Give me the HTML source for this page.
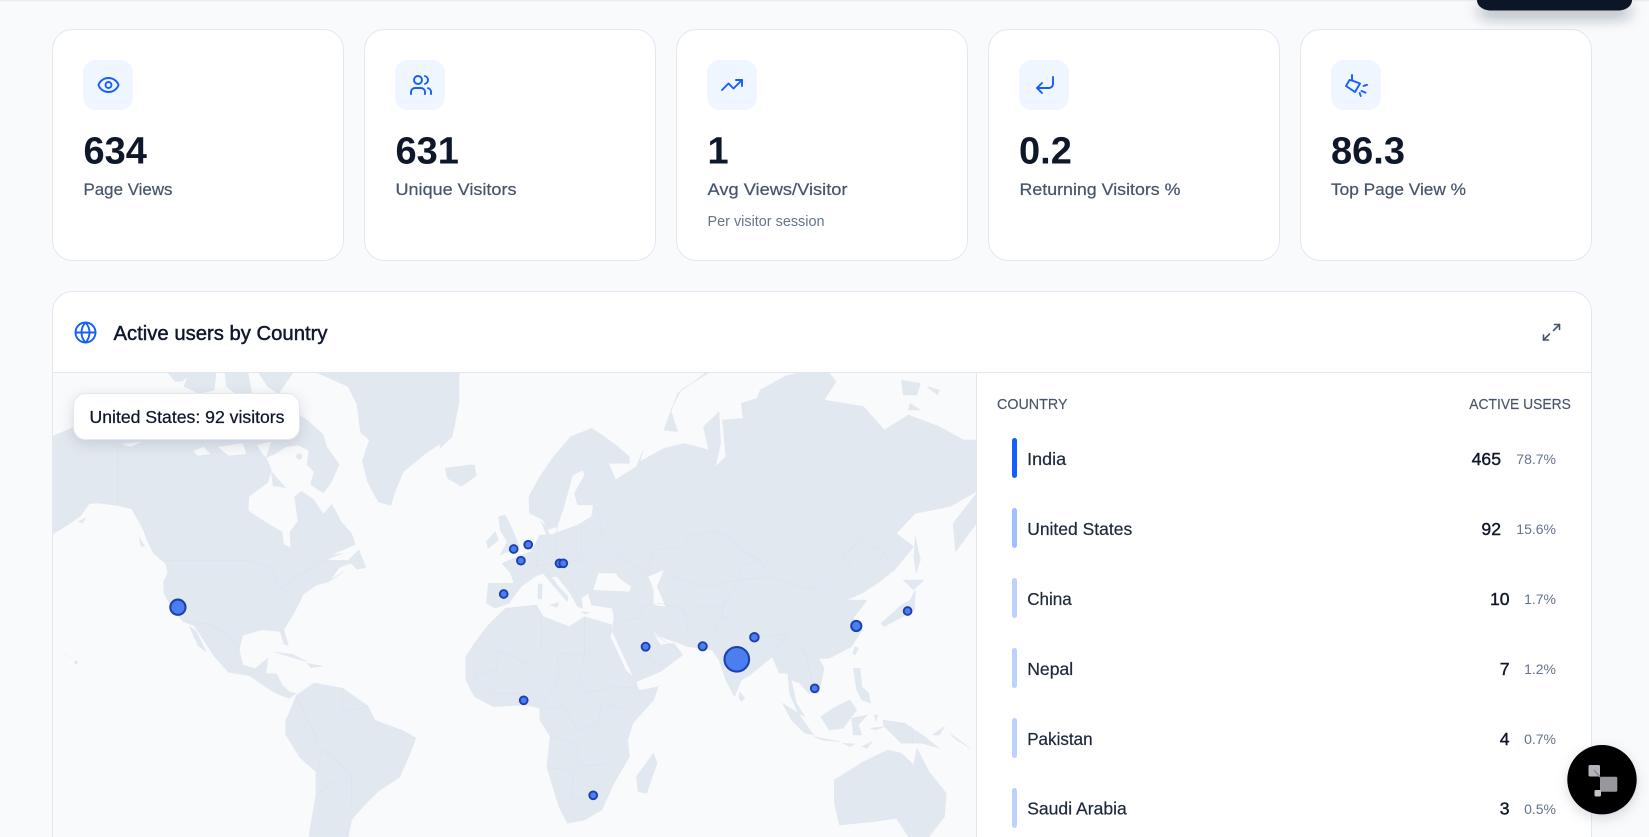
<!DOCTYPE html>
<html><head><meta charset="utf-8"><title>Analytics</title>
<style>
html,body{margin:0;padding:0;width:1649px;height:837px;overflow:hidden;background:#f8fafc}
svg{display:block;font-family:"Liberation Sans",sans-serif}
.num{font-size:38px;font-weight:700;fill:#0f172a}
.lab{font-size:17px;fill:#475569;stroke:#475569;stroke-width:.22}
.sub{font-size:14.5px;fill:#64748b}
.nm{font-size:17.5px;fill:#1e293b;stroke:#1e293b;stroke-width:.22}
.v{font-size:17.6px;fill:#0f172a;stroke:#0f172a;stroke-width:.4;text-anchor:end}
.p{font-size:14px;fill:#64748b;text-anchor:end}
.h{font-size:14.5px;fill:#475569;stroke:#475569;stroke-width:.15}
.ic{fill:none;stroke:#155dfc;stroke-width:1.9;stroke-linecap:round;stroke-linejoin:round}
.card{fill:#fff;stroke:#e2e8f0;stroke-width:1}
.box{fill:#eff6ff}
.land{fill:#e2e8f0;stroke:#e2e8f0;stroke-width:1.5;stroke-linejoin:round}
.water{fill:#f8fafc;stroke:none}
.b{fill:none;stroke:#d9e1eb;stroke-width:1.5;stroke-linejoin:round}
.m{fill:#4b7fef;stroke:#1e40af;stroke-width:1.9}
</style></head><body>
<svg width="1649" height="837" viewBox="0 0 1649 837" xmlns="http://www.w3.org/2000/svg">
<defs>
<clipPath id="mapc"><rect x="53" y="373" width="923" height="464"/></clipPath>
<filter id="sh" x="-30%" y="-60%" width="160%" height="240%"><feDropShadow dx="0" dy="4" stdDeviation="7" flood-color="#0f172a" flood-opacity=".13"/></filter>
<filter id="sh2" filterUnits="userSpaceOnUse" x="1440" y="0" width="209" height="60"><feDropShadow dx="0" dy="7" stdDeviation="7" flood-color="#1e293b" flood-opacity=".38"/></filter>
<filter id="sh3" x="-30%" y="-30%" width="160%" height="160%"><feDropShadow dx="0" dy="4" stdDeviation="6" flood-color="#0f172a" flood-opacity=".14"/></filter>
</defs>
<rect width="1649" height="837" fill="#f8fafc"/>
<rect x="0" y="0" width="1649" height="1" fill="#ebedf1"/>
<rect x="0" y="1" width="1649" height="1" fill="#f3f5f8"/>

<!-- stat cards -->
<rect class="card" x="52.5" y="29.5" width="291" height="231" rx="20"/>
<rect class="card" x="364.5" y="29.5" width="291" height="231" rx="20"/>
<rect class="card" x="676.5" y="29.5" width="291" height="231" rx="20"/>
<rect class="card" x="988.5" y="29.5" width="291" height="231" rx="20"/>
<rect class="card" x="1300.5" y="29.5" width="291" height="231" rx="20"/>
<path d="M1477 0H1632C1632 6 1626 10.5 1618 10.5H1491C1483 10.5 1477 6 1477 0Z" fill="#111827" filter="url(#sh2)"/>
<rect class="box" x="83" y="60" width="50" height="50" rx="13"/>
<rect class="box" x="395" y="60" width="50" height="50" rx="13"/>
<rect class="box" x="707" y="60" width="50" height="50" rx="13"/>
<rect class="box" x="1019" y="60" width="50" height="50" rx="13"/>
<rect class="box" x="1331" y="60" width="50" height="50" rx="13"/>

<g class="ic" transform="translate(96.5,73)"><path d="M2.062 12.348a1 1 0 0 1 0-.696 10.75 10.75 0 0 1 19.876 0 1 1 0 0 1 0 .696 10.75 10.75 0 0 1-19.876 0"/><circle cx="12" cy="12" r="3"/></g>
<g class="ic" transform="translate(409,73)"><path d="M16 21v-2a4 4 0 0 0-4-4H6a4 4 0 0 0-4 4v2"/><circle cx="9" cy="7" r="4"/><path d="M16 3.128a4 4 0 0 1 0 7.744"/><path d="M22 21v-2a4 4 0 0 0-3-3.87"/></g>
<g class="ic" transform="translate(720,73)"><path d="M16 7h6v6"/><path d="m22 7-8.5 8.5-5-5L2 17"/></g>
<g class="ic" transform="translate(1033,73)"><path d="M20 4v7a4 4 0 0 1-4 4H4"/><path d="m9 10-5 5 5 5"/></g>
<g class="ic"><path d="M1349.5 80L1352 80.5L1360 83.5L1355 92L1346 86Z"/><path d="M1352 75v5.5"/><path d="M1363.5 86l3.5-1.2"/><path d="M1361.5 91l4 1.6"/><path d="M1359.7 93l1 3"/></g>

<text class="num" x="83.5" y="163.5">634</text>
<text class="num" x="395.5" y="163.5">631</text>
<text class="num" x="707.5" y="163.5">1</text>
<text class="num" x="1019" y="163.5">0.2</text>
<text class="num" x="1331" y="163.5" textLength="74">86.3</text>
<text class="lab" x="83.5" y="195" textLength="89" lengthAdjust="spacingAndGlyphs">Page Views</text>
<text class="lab" x="395.5" y="195" textLength="121" lengthAdjust="spacingAndGlyphs">Unique Visitors</text>
<text class="lab" x="707.5" y="195" textLength="140" lengthAdjust="spacingAndGlyphs">Avg Views/Visitor</text>
<text class="lab" x="1019.5" y="195" textLength="161" lengthAdjust="spacingAndGlyphs">Returning Visitors %</text>
<text class="lab" x="1331" y="195" textLength="135" lengthAdjust="spacingAndGlyphs">Top Page View %</text>
<text class="sub" x="707.5" y="226" textLength="117" lengthAdjust="spacingAndGlyphs">Per visitor session</text>

<!-- main card -->
<path class="card" d="M52.5 838V311.5a20 20 0 0 1 20-20H1571.5a20 20 0 0 1 20 20V838Z"/>
<line x1="53" y1="372.5" x2="1591" y2="372.5" stroke="#e2e8f0"/>
<g class="ic" transform="translate(73.5,320.5)"><circle cx="12" cy="12" r="10"/><path d="M12 2a14.5 14.5 0 0 0 0 20 14.5 14.5 0 0 0 0-20"/><path d="M2 12h20"/></g>
<text x="113.5" y="340" font-size="20" fill="#0f172a" stroke="#0f172a" stroke-width=".45" textLength="214" lengthAdjust="spacingAndGlyphs">Active users by Country</text>
<g fill="none" stroke="#475569" stroke-width="1.6" stroke-linecap="round" stroke-linejoin="round"><path d="M1554.5 324.5h5v5"/><path d="M1559.5 324.5l-6 6"/><path d="M1543.5 335v5h5"/><path d="M1543.5 340l6-6"/></g>

<!-- map -->
<g clip-path="url(#mapc)">
<rect x="53" y="373" width="923" height="464" fill="#f8fafc"/>
<g transform="translate(0,280) scale(.357,.355)">
<g class="land">
<path d="M148 715L190 690 225 665 250 630 275 628 330 635 370 645 395 685 415 740 430 770 465 800 470 825 458 850 460 885 480 920 510 960 545 975 600 1060 640 1105 700 1115 750 1150 775 1165 810 1178 830 1165 810 1160 790 1140 775 1110 745 1108 750 1065 715 1095 680 1085 670 1040 680 1000 735 985 785 990 795 1025 808 1030 795 985 825 935 850 885 885 860 920 850 965 820 925 845 950 810 1000 790 960 790 905 790 960 770 925 775 995 745 985 715 955 680 930 632 905 660 880 620 845 595 825 610 835 680 812 710 815 755 795 745 790 710 740 680 695 650 697 610 750 570 760 535 745 500 770 490 800 470 840 400 400 400 205 415 148 440Z"/>
<path d="M838 380L860 395 905 435 915 470 950 520 925 575 905 600 870 575 880 540 860 520 865 480 835 465 800 470 790 450 800 400Z"/>
<path d="M760 540L800 585 765 580Z"/>
<path d="M975 790L1005 760 1025 810 1000 815Z"/>
<path d="M530 975L550 990 578 1048 555 1030Z"/>
<path d="M390 725L405 750 395 750Z"/>
<path d="M220 680L240 670 230 685Z"/>
<path d="M470 262L540 262 510 285 490 285Z"/>
<path d="M515 300L530 262 605 262 600 310 560 320Z"/>
<path d="M630 262L695 262 705 318 660 320 635 300Z"/>
<path d="M725 262L820 262 800 290 780 320 750 300Z"/>
<path d="M890 262L1285 262 1285 300 1275 380 1265 440 1190 490 1130 540 1105 600 1095 635 1060 625 1030 570 1015 510 1035 450 1010 430 1000 350 975 300Z"/>
<path d="M1250 530L1320 520 1335 550 1295 580 1255 560Z"/>
<path d="M770 1048L820 1055 860 1075 825 1065Z"/>
<path d="M862 1080L905 1088 870 1092Z"/>
<path d="M810 1220L830 1170 880 1135 960 1150 1030 1200 1050 1240 1130 1270 1165 1290 1150 1330 1120 1400 1060 1440 1020 1480 985 1520 975 1568 865 1568 885 1450 885 1385 840 1345 800 1280 800 1240Z"/>
<circle cx="213" cy="1077" r="4"/><circle cx="183" cy="1056" r="1"/><circle cx="195" cy="1063" r="1"/>
</g>
<g class="water">
<path d="M540 482L570 470 590 490 555 495Z"/><path d="M610 470L680 460 690 490 640 495Z"/><path d="M720 465L760 455 745 500 735 490Z"/><path d="M340 462L400 455 365 470Z"/>
</g>
<g class="land"><circle cx="838" cy="497" r="8"/></g>
<g class="b">
<path d="M330 460V635"/><path d="M465 790H690L760 810 785 870 880 805 925 785"/><path d="M510 960L590 970 640 1000 670 1040"/>
<path d="M370 645L410 720"/>
<path d="M830 1170L860 1240 890 1290 860 1330"/><path d="M900 1320L950 1360 985 1400 985 1480"/><path d="M960 1150V1220L1030 1200"/><path d="M890 1385L900 1320"/><path d="M890 1450L950 1400"/>
</g>
</g>
<g transform="translate(440,360) scale(.3444,.3333)">
<g class="land">
<path d="M140 670L215 670 205 640 180 610 225 590 265 575 290 525 310 525 292 480 320 525 400 495 440 470 445 435 400 435 390 400 420 345 415 330 385 345 360 440 340 500 310 510 300 480 260 460 258 410 290 350 330 290 380 230 440 205 470 225 510 255 550 290 550 310 490 310 510 360 570 320 590 270 580 305 650 265 710 250 780 270 765 200 810 155 815 250 800 320 830 290 820 180 880 175 875 130 920 115 930 90 1000 50 1040 38 1130 38 1150 65 1115 120 1230 140 1290 210 1360 165 1450 200 1520 240 1558 240 1558 395 1480 440 1380 460 1325 520 1375 560 1320 630 1270 670 1225 700 1180 720 1240 720 1200 775 1225 810 1195 860 1130 895 1100 895 1115 925 1100 1000 1070 1000 1045 970 1020 960 1035 1030 1060 1070 1040 1060 1015 1000 1010 940 985 940 965 890 900 945 875 960 855 1010 830 960 810 900 790 870 720 860 680 845 640 830 615 812 640 855 680 850 705 885 640 935 570 965 530 890 500 840 505 770 500 745 440 735 430 700 410 715 415 745 400 740 375 695 340 650 322 650 345 680 372 710 370 725 340 690 300 640 275 650 235 680 200 730 160 745 135 730Z"/>
<path d="M75 890L100 850 140 795 190 745 280 735 300 770 375 800 420 770 500 795 500 830 570 965 575 985 635 975 620 1020 560 1090 545 1140 550 1190 505 1270 470 1350 420 1380 370 1390 345 1340 310 1220 320 1130 290 1080 290 1045 250 1035 155 1040 100 1010 75 960Z"/>
<path d="M620 1180L630 1210 600 1300 575 1295 570 1250Z"/>
<path d="M870 995L885 1015 875 1025 868 1015Z"/>
<path d="M170 470L190 465 215 520 230 560 175 585 195 545 175 510Z"/>
<path d="M135 545L160 515 170 540 140 565Z"/>
<path d="M15 325L100 315 105 345 60 378 20 350Z"/>
<path d="M285 672L297 672 295 718 284 715Z"/>
<path d="M318 735L345 728 340 742Z"/>
<path d="M410 755L435 758 420 762Z"/>
<path d="M1558 400L1490 490 1497 575 1558 490Z"/>
<path d="M1280 790L1340 735 1365 720 1380 690 1378 750 1290 800Z"/>
<path d="M1345 660L1405 660 1375 690Z"/>
<path d="M1380 530L1395 600 1382 640 1376 590Z"/>
<path d="M1205 860L1215 865 1205 885 1198 880Z"/>
<path d="M1200 925L1220 925 1225 980 1245 1000 1250 1030 1225 1020 1210 990Z"/>
<path d="M1105 1070L1150 1040 1190 1020 1210 1050 1170 1105 1130 1110Z"/>
<path d="M995 1030L1040 1060 1085 1125 1060 1120 1020 1080Z"/>
<path d="M1085 1130L1160 1145 1110 1140Z"/><path d="M1170 1150L1205 1152 1190 1160Z"/><path d="M1225 1160L1255 1145 1240 1165Z"/>
<path d="M1195 1075L1240 1065 1215 1095 1225 1125 1200 1125Z"/>
<path d="M1250 1105L1290 1100 1265 1110Z"/><path d="M1260 1065L1270 1065 1268 1085Z"/>
<path d="M1285 1080L1350 1090 1400 1125 1450 1165 1400 1150 1340 1150 1290 1100Z"/>
<path d="M1430 1125L1465 1100 1450 1125Z"/><path d="M1480 1120L1540 1165 1500 1140Z"/>
<path d="M1145 1260L1230 1205 1300 1170 1340 1180 1375 1215 1385 1165 1420 1235 1470 1300 1465 1370 1420 1430 1360 1430 1325 1375 1260 1385 1160 1395 1145 1330Z"/>
<path d="M650 210L690 100 770 40 780 38 700 90 670 150 690 215Z"/>
<path d="M1340 60L1395 70 1385 105 1345 105Z"/><path d="M1415 80L1450 90 1445 105Z"/><path d="M1365 130L1395 150 1360 150Z"/>
<path d="M0 38H55L55 130 35 230 0 265Z"/>
</g>
<g class="water">
<path d="M445 690L460 640 510 640 520 655 555 680 550 695Z"/>
<path d="M605 650L650 630 630 680 655 740 620 735 620 690Z"/>
<path d="M500 815L560 950 540 930 495 830Z"/>
<path d="M575 985L635 972 632 980 580 990Z"/>
</g>
<g class="b">
<path d="M600 640L620 570 710 560 720 530 790 515 850 535 870 570 930 600 960 650 1070 690 1165 640 1195 620 1170 590 1220 540 1280 570 1320 620"/>
<path d="M670 650L760 680 870 660 870 620 930 600"/>
<path d="M580 740L640 730 710 750 720 810 790 870"/><path d="M820 770L860 790 940 830 1010 820 965 890"/><path d="M740 740L820 740 820 770 790 830"/>
<path d="M960 650L870 660 820 740"/><path d="M1020 820L1060 880 1080 960"/>
<path d="M270 620L400 600 540 600 600 640"/><path d="M340 500L335 600"/><path d="M410 495L410 600"/><path d="M455 440L470 520 540 600"/><path d="M290 525L280 620"/>
<path d="M500 790L590 770 580 740"/><path d="M590 800L690 870"/><path d="M580 870L640 920"/>
<path d="M295 770V860L250 910 170 870 165 930 100 950"/><path d="M420 770V885L340 880 345 960 250 960"/><path d="M420 885L400 970 430 1000 500 980 570 985"/><path d="M345 960L290 1045 360 1040 400 1110 460 1090 470 1030 550 1050"/><path d="M320 1130L400 1150 400 1220 500 1210"/><path d="M315 1225L390 1230 380 1320 430 1310 470 1260"/><path d="M100 950L150 1000 230 1000 240 1030"/>
<path d="M1370 1095L1372 1150"/>
</g>
</g>
</g>
<line x1="976.5" y1="373" x2="976.5" y2="837" stroke="#e2e8f0"/>

<!-- markers -->
<g class="m">
<circle cx="736.8" cy="659.3" r="12.3" stroke-width="2.1"/>
<circle cx="177.9" cy="607.2" r="7.6" stroke-width="2.1"/>
<circle cx="856.3" cy="626" r="5.1" stroke-width="2"/>
<circle cx="754.4" cy="637.3" r="4.3"/>
<circle cx="702.7" cy="646.3" r="4.1"/>
<circle cx="645.6" cy="646.7" r="4"/>
<circle cx="523.7" cy="700.3" r="3.9"/>
<circle cx="593.2" cy="795.3" r="3.9"/>
<circle cx="907.6" cy="611" r="3.9"/>
<circle cx="814.7" cy="688.3" r="3.9"/>
<circle cx="503.7" cy="594" r="3.9"/>
<circle cx="513.7" cy="549" r="3.9"/>
<circle cx="528.2" cy="544.7" r="3.9"/>
<circle cx="520.9" cy="560.7" r="3.9"/>
<circle cx="559.5" cy="563.3" r="3.9"/>
<circle cx="563.3" cy="563.3" r="3.9"/>
</g>

<!-- tooltip -->
<rect x="73.5" y="393.5" width="226" height="46" rx="12" fill="#fff" stroke="#e2e8f0" filter="url(#sh)"/>
<text x="89.5" y="423" font-size="17.5" fill="#0f172a" stroke="#0f172a" stroke-width=".25" textLength="195" lengthAdjust="spacingAndGlyphs">United States: 92 visitors</text>

<!-- table -->
<text class="h" x="997" y="409" textLength="70.5" lengthAdjust="spacingAndGlyphs">COUNTRY</text>
<text class="h" x="1469.3" y="409" textLength="101.5" lengthAdjust="spacingAndGlyphs">ACTIVE USERS</text>

<rect x="1012" y="438" width="5" height="40" rx="2.5" fill="#155dfc"/>
<rect x="1012" y="508" width="5" height="40" rx="2.5" fill="#9fc0fb"/>
<rect x="1012" y="578" width="5" height="40" rx="2.5" fill="#bdd1fb"/>
<rect x="1012" y="648" width="5" height="40" rx="2.5" fill="#bdd1fb"/>
<rect x="1012" y="718" width="5" height="40" rx="2.5" fill="#bdd1fb"/>
<rect x="1012" y="788" width="5" height="40" rx="2.5" fill="#bdd1fb"/>

<text class="nm" x="1027.2" y="465" textLength="39" lengthAdjust="spacingAndGlyphs">India</text>
<text class="nm" x="1027.2" y="535" textLength="105" lengthAdjust="spacingAndGlyphs">United States</text>
<text class="nm" x="1027.2" y="605" textLength="44.6" lengthAdjust="spacingAndGlyphs">China</text>
<text class="nm" x="1027.2" y="675" textLength="46" lengthAdjust="spacingAndGlyphs">Nepal</text>
<text class="nm" x="1027.2" y="745" textLength="65.4" lengthAdjust="spacingAndGlyphs">Pakistan</text>
<text class="nm" x="1027.2" y="814.5" textLength="99.6" lengthAdjust="spacingAndGlyphs">Saudi Arabia</text>

<text class="v" x="1501" y="465">465</text><text class="p" x="1556" y="464">78.7%</text>
<text class="v" x="1501" y="535">92</text><text class="p" x="1556" y="534">15.6%</text>
<text class="v" x="1509.6" y="605">10</text><text class="p" x="1556" y="604">1.7%</text>
<text class="v" x="1509.6" y="675">7</text><text class="p" x="1556" y="674">1.2%</text>
<text class="v" x="1509.6" y="745">4</text><text class="p" x="1556" y="744">0.7%</text>
<text class="v" x="1509.6" y="814.5">3</text><text class="p" x="1556" y="814">0.5%</text>

<!-- floating button -->
<circle cx="1602" cy="779.7" r="34.7" fill="#000" filter="url(#sh3)"/>
<rect x="1588.5" y="765" width="11.5" height="11.5" rx="1.5" fill="#b4b4bc"/>
<path d="M1594 770l6 7" stroke="#8a8a90" stroke-width="1.5"/>
<rect x="1600" y="776.7" width="17.3" height="15" rx="1.5" fill="#97979e"/>
<rect x="1594.5" y="790" width="6.5" height="6.5" rx="1.5" fill="#c4c4ca"/>
</svg>
</body></html>
